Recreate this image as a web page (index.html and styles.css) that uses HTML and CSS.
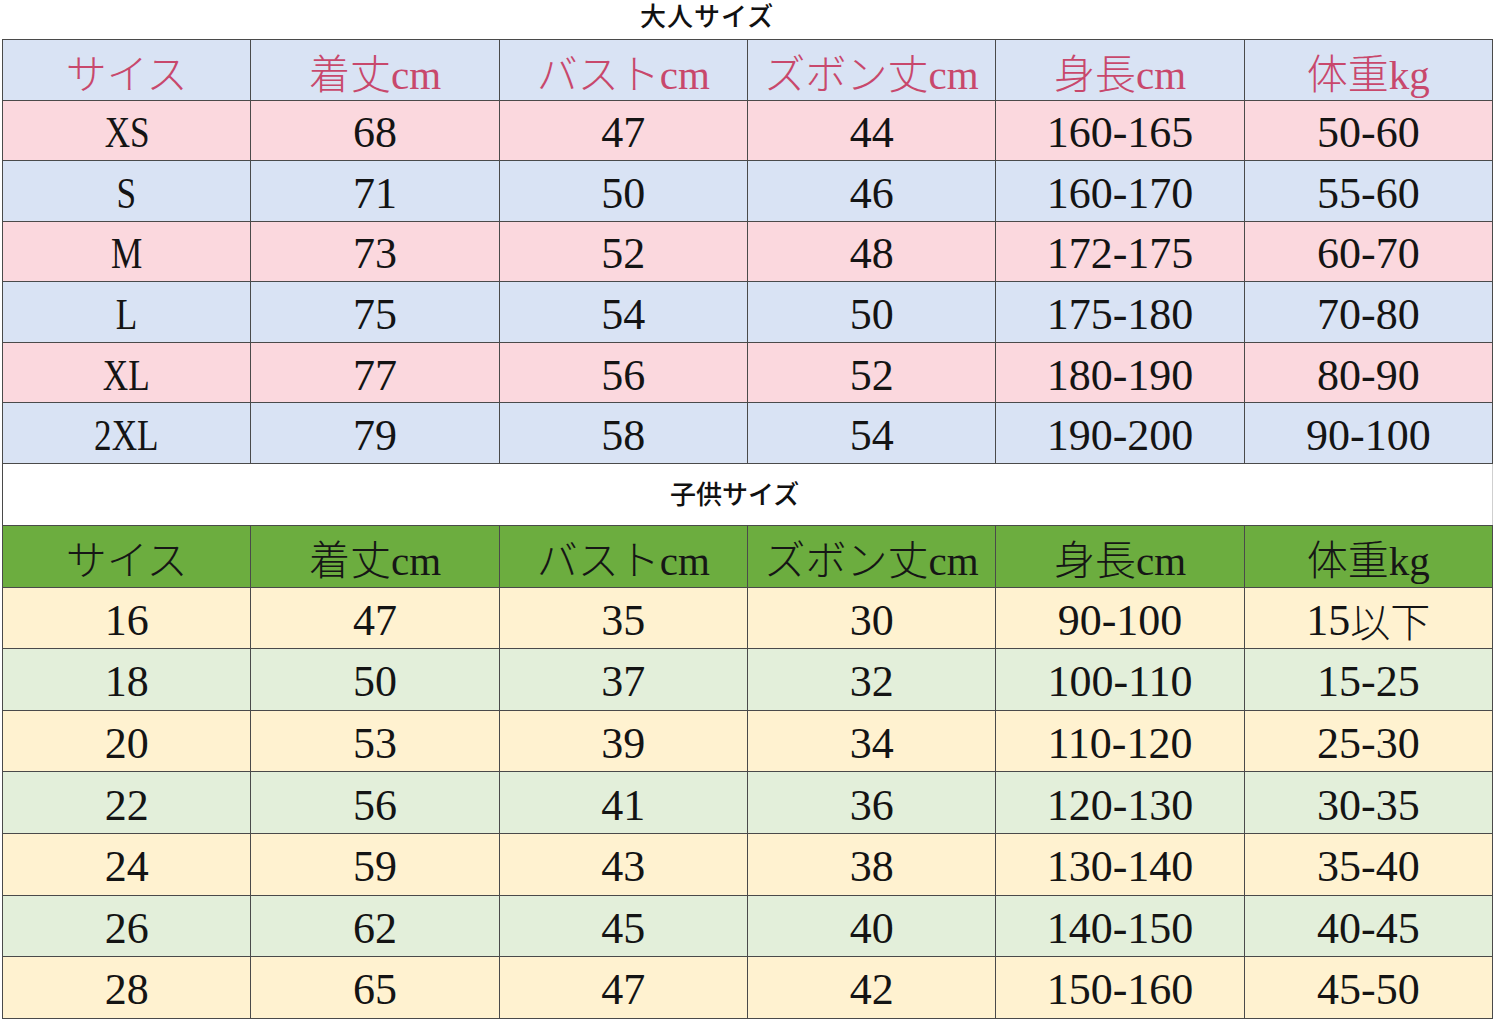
FILE: index.html
```html
<!DOCTYPE html>
<html lang="ja">
<head>
<meta charset="utf-8">
<title>サイズ表</title>
<link rel="stylesheet" href="styles.css">
</head>
<body>
<div class="page">
  <div class="title">大人サイズ</div>
  <div class="grid adult">
    <div class="c h">サイス</div><div class="c h">着丈cm</div><div class="c h">バストcm</div><div class="c h">ズボン丈cm</div><div class="c h">身長cm</div><div class="c h">体重kg</div>
    <div class="c p"><span class="lat">XS</span></div><div class="c p">68</div><div class="c p">47</div><div class="c p">44</div><div class="c p">160-165</div><div class="c p">50-60</div>
    <div class="c b"><span class="lat">S</span></div><div class="c b">71</div><div class="c b">50</div><div class="c b">46</div><div class="c b">160-170</div><div class="c b">55-60</div>
    <div class="c p"><span class="lat">M</span></div><div class="c p">73</div><div class="c p">52</div><div class="c p">48</div><div class="c p">172-175</div><div class="c p">60-70</div>
    <div class="c b"><span class="lat">L</span></div><div class="c b">75</div><div class="c b">54</div><div class="c b">50</div><div class="c b">175-180</div><div class="c b">70-80</div>
    <div class="c p"><span class="lat">XL</span></div><div class="c p">77</div><div class="c p">56</div><div class="c p">52</div><div class="c p">180-190</div><div class="c p">80-90</div>
    <div class="c b"><span class="lat">2XL</span></div><div class="c b">79</div><div class="c b">58</div><div class="c b">54</div><div class="c b">190-200</div><div class="c b">90-100</div>
  </div>
  <div class="subtitle">子供サイズ</div>
  <div class="grid kids">
    <div class="c g">サイス</div><div class="c g">着丈cm</div><div class="c g">バストcm</div><div class="c g">ズボン丈cm</div><div class="c g">身長cm</div><div class="c g">体重kg</div>
    <div class="c y">16</div><div class="c y">47</div><div class="c y">35</div><div class="c y">30</div><div class="c y">90-100</div><div class="c y">15<span class="kj">以下</span></div>
    <div class="c l">18</div><div class="c l">50</div><div class="c l">37</div><div class="c l">32</div><div class="c l">100-110</div><div class="c l">15-25</div>
    <div class="c y">20</div><div class="c y">53</div><div class="c y">39</div><div class="c y">34</div><div class="c y">110-120</div><div class="c y">25-30</div>
    <div class="c l">22</div><div class="c l">56</div><div class="c l">41</div><div class="c l">36</div><div class="c l">120-130</div><div class="c l">30-35</div>
    <div class="c y">24</div><div class="c y">59</div><div class="c y">43</div><div class="c y">38</div><div class="c y">130-140</div><div class="c y">35-40</div>
    <div class="c l">26</div><div class="c l">62</div><div class="c l">45</div><div class="c l">40</div><div class="c l">140-150</div><div class="c l">40-45</div>
    <div class="c y">28</div><div class="c y">65</div><div class="c y">47</div><div class="c y">42</div><div class="c y">150-160</div><div class="c y">45-50</div>
  </div>
</div>
</body>
</html>
```
FILE: styles.css
```css
html, body {
  margin: 0;
  padding: 0;
  background: #ffffff;
}
.page {
  width: 1500px;
  height: 1022px;
  overflow: hidden;
}
.title {
  height: 39px;
  box-sizing: border-box;
  padding-left: 640px;
  padding-top: 1px;
  font-family: "Noto Sans CJK JP", sans-serif;
  font-size: 26px;
  font-weight: 500;
  line-height: 28px;
  color: #111;
  letter-spacing: 1px;
}
.grid {
  margin-left: 2px;
  width: 1491px;
  box-sizing: border-box;
  display: grid;
  grid-template-columns: repeat(6, 1fr);
  border-left: 1px solid #4a4a4a;
  border-top: 1px solid #4a4a4a;
}
.adult {
  grid-auto-rows: 60.57px;
}
.kids {
  grid-auto-rows: 61.6px;
}
.c {
  box-sizing: border-box;
  border-right: 1px solid #4a4a4a;
  border-bottom: 1px solid #4a4a4a;
  display: flex;
  align-items: center;
  justify-content: center;
  font-family: "Liberation Serif", "Noto Sans CJK JP", serif;
  font-size: 44px;
  color: #141414;
  padding-top: 5px;
  white-space: nowrap;
}
.h, .g {
  font-size: 41px;
  font-weight: 300;
  padding-top: 2px;
}
.h {
  background: #d9e3f4;
  color: #c8486c;
}
.g {
  background: #6cad3f;
  color: #161616;
}
.p { background: #fbd8de; }
.b { background: #d9e3f4; }
.y { background: #fff2d0; }
.l { background: #e3efda; }
.lat {
  display: inline-block;
  transform: scaleX(0.8);
}
.kj {
  font-size: 40px;
  font-weight: 300;
}
.subtitle {
  margin-left: 2px;
  width: 1491px;
  height: 61px;
  box-sizing: border-box;
  border-left: 1px solid #4a4a4a;
  border-right: 1px solid #cfcfcf;
  padding-left: 667px;
  padding-top: 14px;
  font-family: "Noto Sans CJK JP", sans-serif;
  font-size: 26px;
  font-weight: 500;
  line-height: 30px;
  color: #111;
}
```
